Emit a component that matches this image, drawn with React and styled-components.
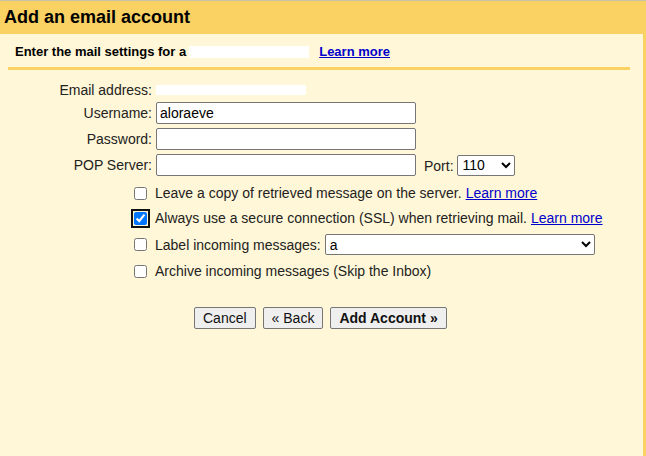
import React from 'react';
import styled, { createGlobalStyle } from 'styled-components';

const Global = createGlobalStyle`
  html, body { margin: 0; padding: 0; background: #fff7d7; }
  body { font-family: Arial, "Liberation Sans", sans-serif; font-size: 13px; color: #000; }
`;

const Page = styled.div`
  width: 646px;
  height: 456px;
  display: flex;
  flex-direction: column;
  border-top: 1px solid #c8c0a8;
  box-sizing: border-box;
  overflow: hidden;
`;

const Header = styled.div`
  background: #fad163;
  height: 33px;
  padding-left: 4px;
  display: flex;
  align-items: center;
  font-size: 18px;
  font-weight: bold;
  flex-shrink: 0;
`;

const Body = styled.div`
  flex: 1;
  background: #fff7d7;
  border-right: 3px solid #fad163;
`;

const Sub = styled.div`
  margin: 0 13px 0 8px;
  padding: 10px 0 8px 7px;
  border-bottom: 3px solid #fad163;
  font-weight: bold;
  display: flex;
  align-items: center;
`;

const Mask = styled.span`
  display: inline-block;
  width: 120px;
  height: 12px;
  background: #fff;
  margin: 0 10px 0 3px;
`;

const Link = styled.a`
  color: #0000cc;
  text-decoration: underline;
  font-weight: ${p => (p.bold ? 'bold' : 'normal')};
  cursor: pointer;
`;

const Form = styled.div`
  display: grid;
  grid-template-columns: 156px auto;
  row-gap: 4px;
  padding-top: 12px;
  align-items: center;
`;

const Label = styled.div`
  text-align: right;
  padding-right: 4px;
  font-size: 14px;
  color: #222;
`;

const Field = styled.div`
  display: flex;
  align-items: center;
  gap: 8px;
  font-size: 14px;
  color: #222;
`;

const Input = styled.input`
  width: 260px;
  height: 22px;
  box-sizing: border-box;
  border: 1px solid #767676;
  border-radius: 2px;
  background: #fff;
  font: 14px Arial, "Liberation Sans", sans-serif;
  padding: 0 3px;
`;

const Select = styled.select`
  width: ${p => p.w}px;
  height: 21px;
  border: 1px solid #767676;
  border-radius: 2px;
  background: #fff;
  font: 14px Arial, "Liberation Sans", sans-serif;
`;

const WhiteText = styled.span`
  display: inline-block;
  width: ${p => p.w}px;
  height: 10px;
  background: #fff;
`;

const Checks = styled.div`
  display: flex;
  flex-direction: column;
  gap: 7px;
  padding: 8px 0 0 134px;
`;

const CheckRow = styled.label`
  display: flex;
  align-items: center;
  gap: 8px;
  font-size: 14px;
  color: #222;
  min-height: 18px;
`;

const Box = styled.input`
  margin: 0;
  width: 13px;
  height: 13px;
  accent-color: #0075ff;
  outline: ${p => (p.focus ? '2px solid #101010' : 'none')};
  outline-offset: 1px;
`;

const Buttons = styled.div`
  display: flex;
  gap: 7px;
  padding: 27px 0 0 194px;
`;

const Button = styled.button`
  height: 22px;
  padding: 0 8px;
  border: 1px solid #767676;
  border-radius: 2px;
  background: #efefef;
  font: ${p => (p.bold ? 'bold' : 'normal')} 14px Arial, "Liberation Sans", sans-serif;
  color: #111;
`;

export default function App() {
  return (
    <Page>
      <Global />
      <Header>Add an email account</Header>
      <Body>
        <Sub>
          Enter the mail settings for a<Mask />
          <Link bold>Learn more</Link>
        </Sub>
        <Form>
          <Label>Email address:</Label>
          <Field><WhiteText w={150} /></Field>
          <Label>Username:</Label>
          <Field><Input defaultValue="aloraeve" /></Field>
          <Label>Password:</Label>
          <Field><Input type="password" /></Field>
          <Label>POP Server:</Label>
          <Field>
            <Input defaultValue="" />
            <span>Port: <Select w={58} defaultValue="110"><option>110</option><option>995</option></Select></span>
          </Field>
        </Form>
        <Checks>
          <CheckRow><Box type="checkbox" />Leave a copy of retrieved message on the server. <Link style={{ marginLeft: -4 }}>Learn more</Link></CheckRow>
          <CheckRow><Box type="checkbox" defaultChecked focus />Always use a secure connection (SSL) when retrieving mail. <Link style={{ marginLeft: -4 }}>Learn more</Link></CheckRow>
          <CheckRow><Box type="checkbox" />Label incoming messages: <Select w={270} style={{ marginLeft: -4 }}><option>a</option></Select></CheckRow>
          <CheckRow><Box type="checkbox" />Archive incoming messages (Skip the Inbox)</CheckRow>
        </Checks>
        <Buttons>
          <Button>Cancel</Button>
          <Button>« Back</Button>
          <Button bold>Add Account »</Button>
        </Buttons>
      </Body>
    </Page>
  );
}
